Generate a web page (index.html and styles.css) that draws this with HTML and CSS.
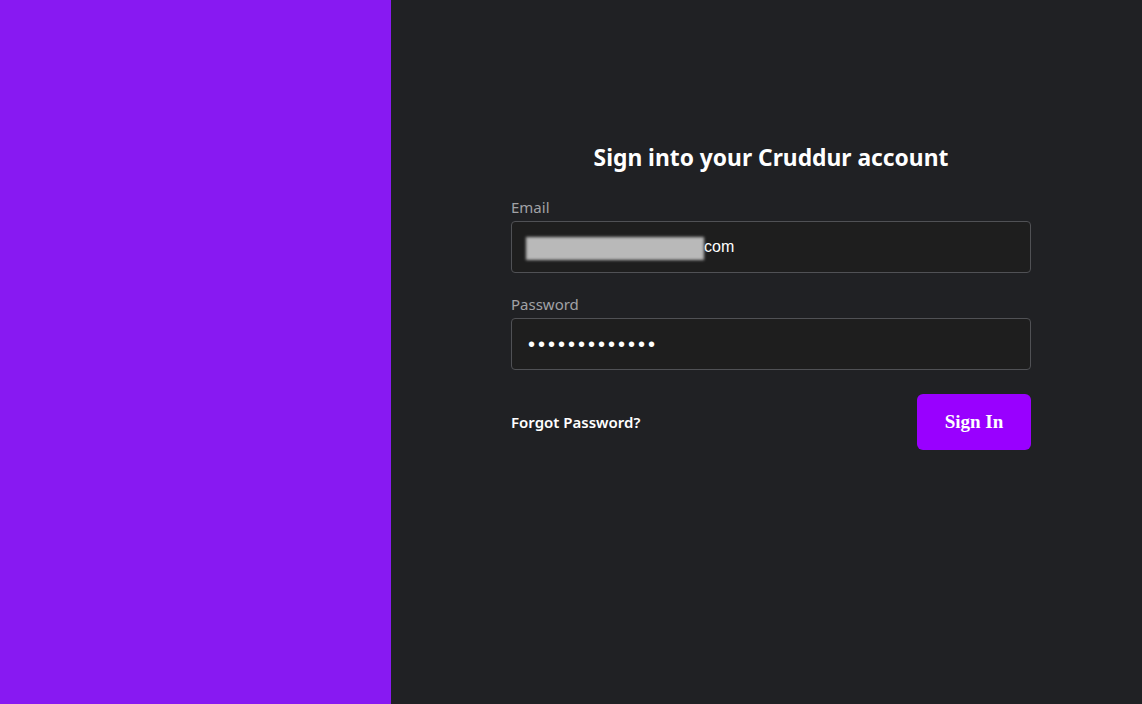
FILE: index.html
```html
<!DOCTYPE html>
<html lang="en">
<head>
<meta charset="utf-8">
<title>Sign in - Cruddur</title>
<link rel="stylesheet" href="styles.css">
</head>
<body>
<div class="page">
  <aside class="brand-panel"></aside>
  <main class="content-panel">
    <form class="signin-form" onsubmit="return false">
      <h2 class="title">Sign into your Cruddur account</h2>
      <div class="field">
        <label class="label">Email</label>
        <div class="box">
          <span class="redact"></span>
          <input class="input input-email" type="text" value="com">
        </div>
      </div>
      <div class="field field-last">
        <label class="label">Password</label>
        <div class="box">
          <input class="input input-pass" type="password" value="xxxxxxxxxxxxx">
        </div>
      </div>
      <div class="actions">
        <a class="forgot" href="#">Forgot Password?</a>
        <button class="submit" type="submit">Sign In</button>
      </div>
    </form>
  </main>
</div>
</body>
</html>
```

FILE: styles.css
```css
* { box-sizing: border-box; }
html, body { margin: 0; height: 100%; }
body {
  font-family: "Noto Sans", "Open Sans", sans-serif;
  background: #202124;
}
.page {
  display: flex;
  height: 704px;
}
.brand-panel {
  width: 391px;
  flex: none;
  background: #8819f2;
}
.content-panel {
  flex: 1;
  background: #202124;
  padding-left: 120px;
  padding-top: 140px;
}
.signin-form {
  width: 520px;
  display: flex;
  flex-direction: column;
}
.title {
  margin: 0 0 20px;
  text-align: center;
  color: #ffffff;
  font-size: 22.8px;
  font-weight: 700;
  line-height: 36px;
}
.field {
  display: flex;
  flex-direction: column;
  margin-bottom: 20px;
}
.field-last { margin-bottom: 0; }
.label {
  color: #a1a2a6;
  font-size: 15px;
  line-height: 22px;
  margin-bottom: 3px;
}
.box {
  display: flex;
  align-items: center;
  height: 52px;
  border: 1px solid #505155;
  border-radius: 4px;
  background: #1e1e1e;
  padding: 0 16px;
}
.redact {
  width: 178px;
  height: 23px;
  margin-left: -2px;
  margin-top: 2px;
  background: #b9b9b9;
  filter: blur(1.5px);
  flex: none;
}
.input {
  flex: 1;
  min-width: 0;
  border: none;
  outline: none;
  background: transparent;
  color: #ffffff;
  font-family: "Liberation Sans", Arial, sans-serif;
  font-size: 16px;
  padding: 0;
}
.input-pass {
  font-size: 20px;
  letter-spacing: 3px;
}
.actions {
  display: flex;
  justify-content: space-between;
  align-items: center;
  margin-top: 24px;
}
.forgot {
  color: #ffffff;
  text-decoration: none;
  font-size: 15px;
  font-weight: 600;
}
.submit {
  width: 114px;
  height: 56px;
  border: none;
  border-radius: 6px;
  background: #9900ff;
  color: #ffffff;
  font-family: "Liberation Serif", "Times New Roman", serif;
  font-size: 19px;
  font-weight: 700;
  cursor: pointer;
}
```
